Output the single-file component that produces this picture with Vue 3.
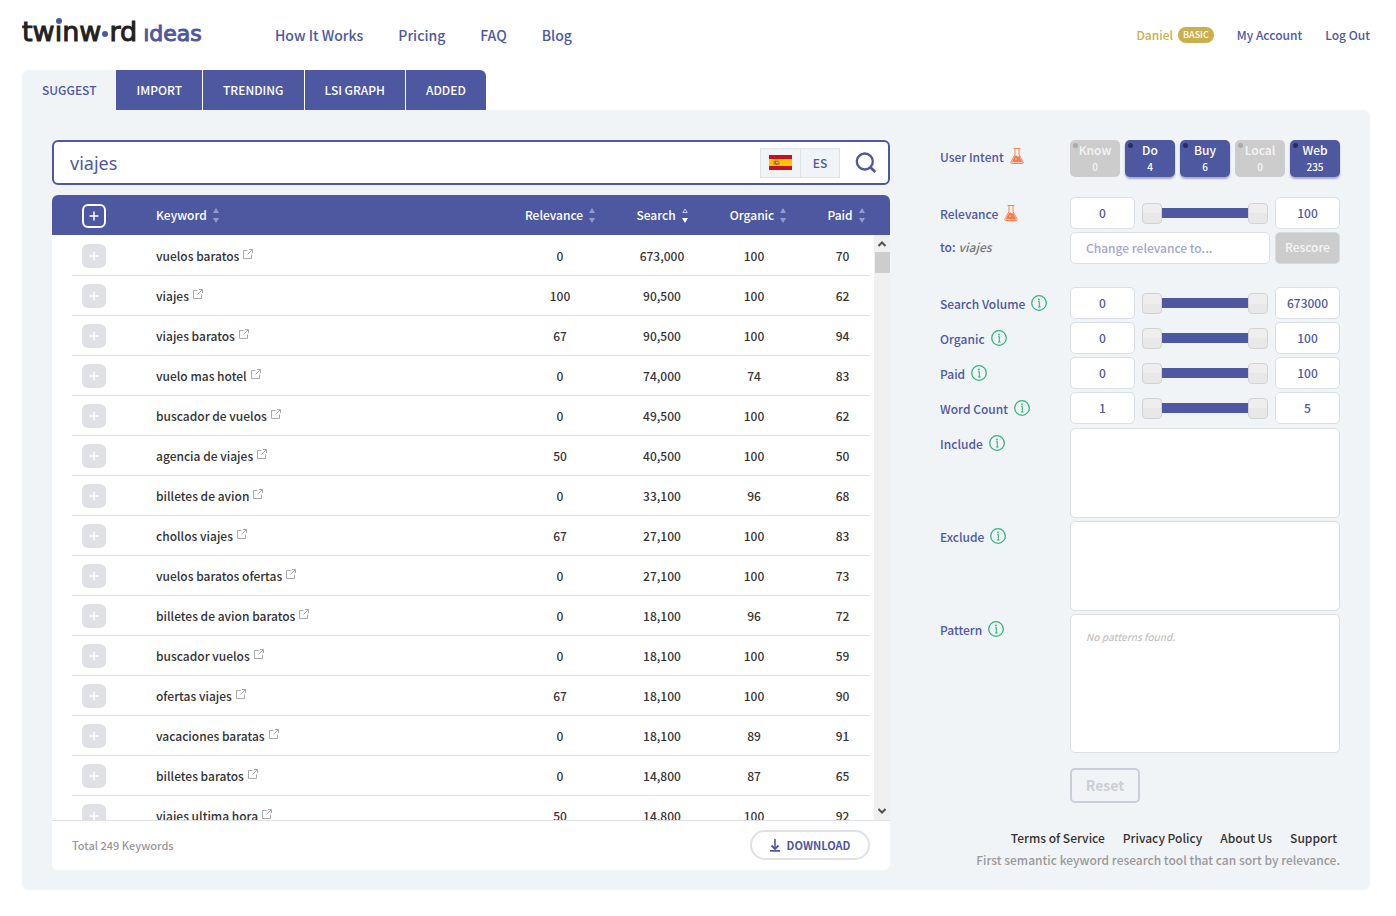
<script setup>
import { ref, reactive } from 'vue'

const nav = ['How It Works', 'Pricing', 'FAQ', 'Blog']
const tabs = ['SUGGEST', 'IMPORT', 'TRENDING', 'LSI GRAPH', 'ADDED']
const activeTab = ref('SUGGEST')
const query = ref('viajes')

const columns = [
  { label: 'Keyword', key: 'keyword' },
  { label: 'Relevance', key: 'relevance' },
  { label: 'Search', key: 'volume', sorted: true },
  { label: 'Organic', key: 'organic' },
  { label: 'Paid', key: 'paid' },
]

const rows = [
  ['vuelos baratos', 0, '673,000', 100, 70],
  ['viajes', 100, '90,500', 100, 62],
  ['viajes baratos', 67, '90,500', 100, 94],
  ['vuelo mas hotel', 0, '74,000', 74, 83],
  ['buscador de vuelos', 0, '49,500', 100, 62],
  ['agencia de viajes', 50, '40,500', 100, 50],
  ['billetes de avion', 0, '33,100', 96, 68],
  ['chollos viajes', 67, '27,100', 100, 83],
  ['vuelos baratos ofertas', 0, '27,100', 100, 73],
  ['billetes de avion baratos', 0, '18,100', 96, 72],
  ['buscador vuelos', 0, '18,100', 100, 59],
  ['ofertas viajes', 67, '18,100', 100, 90],
  ['vacaciones baratas', 0, '18,100', 89, 91],
  ['billetes baratos', 0, '14,800', 87, 65],
  ['viajes ultima hora', 50, '14,800', 100, 92],
]

const intents = reactive([
  { name: 'Know', count: 0, on: false },
  { name: 'Do', count: 4, on: true },
  { name: 'Buy', count: 6, on: true },
  { name: 'Local', count: 0, on: false },
  { name: 'Web', count: 235, on: true },
])

const relevance = reactive({ id: 'relevance', label: 'Relevance', min: 0, max: 100, low: 0, high: 100, flask: true })
const volume = reactive([
  { id: 'volume', label: 'Search Volume', min: 0, max: 673000, low: 0, high: 673000 },
  { id: 'organic', label: 'Organic', min: 0, max: 100, low: 0, high: 100 },
  { id: 'paid', label: 'Paid', min: 0, max: 100, low: 0, high: 100 },
  { id: 'words', label: 'Word Count', min: 1, max: 5, low: 1, high: 5 },
])
const groups = [[relevance], volume]
const footerLinks = ['Terms of Service', 'Privacy Policy', 'About Us', 'Support']
</script>

<template>
  <div class="page">
    <svg class="sprite" aria-hidden="true">
      <symbol id="flask" viewBox="0 0 14 16">
        <path d="M3.5.5h7M5 .5v6L.8 14.2q-.4 1.2.8 1.3h10.8q1.2-.1.8-1.3L9 6.500v-6" fill="none" stroke="#f98355" />
        <path d="M5 7.500 1.800 14.200h10.400L9 7.500l-.8 1.200-1.200-1z" fill="#fb7a48" />
        <circle cx="6" cy="11" r=".7" fill="#fff" />
      </symbol>
      <symbol id="info" viewBox="0 0 16 16">
        <circle cx="8" cy="8" r="7.300" fill="none" stroke="#35b57a" stroke-width="1.300" />
        <path d="M7 6.700h1.300V12M7 12h2.600" fill="none" stroke="#35b57a" stroke-width="1.100" />
        <circle cx="8" cy="4.500" r=".9" fill="#35b57a" />
      </symbol>
      <symbol id="plus" viewBox="0 0 10 10">
        <path d="M5 .5v9M.5 5h9" fill="none" stroke="#fff" stroke-width="1.500" />
      </symbol>
      <symbol id="external" viewBox="0 0 10 10">
        <path d="M4.500 1.500h-4v8h8v-4M6 .5h3.500V4M9.300.7 4.500 5.500" fill="none" stroke="#aaa" />
      </symbol>
    </svg>

    <header class="top">
      <a href="#" class="logo" aria-label="twinword ideas">
        <span class="brand">tw<span class="dotted">ı</span>nw<span class="mid"></span>rd</span>
        <span class="product">ıdeas</span>
      </a>
      <nav class="nav">
        <a v-for="n in nav" :key="n" href="#">{{ n }}</a>
      </nav>
      <div class="account">
        <a href="#" class="user">Daniel <span class="badge">BASIC</span></a>
        <a href="#">My Account</a>
        <a href="#">Log Out</a>
      </div>
    </header>

    <div class="tabs" role="tablist">
      <button v-for="t in tabs" :key="t" role="tab" :aria-selected="t === activeTab" :class="{ active: t === activeTab }" @click="activeTab = t">{{ t }}</button>
    </div>

    <main class="panel">
      <section class="results">
        <form class="search" @submit.prevent>
          <input v-model="query" type="text" aria-label="Keyword search" />
          <button type="button" class="lang" aria-label="Language: ES">
            <span class="cell">
              <svg class="flag" viewBox="0 0 23 15">
                <path d="M0 0h23v15H0z" fill="#c4111f" />
                <path d="M0 4h23v7H0z" fill="#fec400" />
                <path d="M5.500 6h4v3q-2 2-4 0z" fill="#b5562a" />
                <path d="M5.500 5h4M5 6v4M10 7v3" stroke="#a6762c" fill="none" />
                <circle cx="8" cy="7.500" r="1" fill="#d9bfa0" />
              </svg>
            </span>
            <span class="cell">ES</span>
          </button>
          <button type="submit" class="go" aria-label="Search">
            <svg viewBox="0 0 22 22" fill="none" stroke="#4e58a1" stroke-width="2.300">
              <circle cx="9.800" cy="9.500" r="8" />
              <path d="M15.300 15.300 20.300 20" stroke-width="2.800" />
            </svg>
          </button>
        </form>

        <div class="card">
          <div class="list">
            <table>
              <colgroup>
                <col class="c-add" /><col /><col class="c-num" /><col class="c-num" /><col class="c-organic" /><col class="c-paid" />
              </colgroup>
              <thead>
                <tr>
                  <th class="add"><button class="plus all" aria-label="Add all"><svg><use href="#plus" /></svg></button></th>
                  <th v-for="c in columns" :key="c.key" :class="c.key">
                    <span class="head">{{ c.label }}
                      <svg class="sort" viewBox="0 0 6 15">
                        <path v-if="c.sorted" d="M.8 4.500 3 1l2.200 3.500z" fill="none" stroke="#dfe2f2" stroke-width=".8" />
                        <path v-else d="M0 5 3 0l3 5z" fill="#949bcb" />
                        <path d="M0 10h6l-3 5z" :fill="c.sorted ? '#fff' : '#949bcb'" />
                      </svg>
                    </span>
                  </th>
                </tr>
              </thead>
              <tbody>
                <tr v-for="r in rows" :key="r[0]">
                  <td class="add"><button class="plus" :aria-label="'Add ' + r[0]"><svg><use href="#plus" /></svg></button></td>
                  <td class="keyword">{{ r[0] }}<a href="#" class="ext" :aria-label="'Open ' + r[0]"><svg><use href="#external" /></svg></a></td>
                  <td>{{ r[1] }}</td>
                  <td>{{ r[2] }}</td>
                  <td>{{ r[3] }}</td>
                  <td class="paid">{{ r[4] }}</td>
                </tr>
              </tbody>
            </table>
            <div class="scrollbar" aria-hidden="true">
              <svg viewBox="0 0 8 6"><path d="M.5 5 4 1.500 7.500 5" /></svg>
              <span class="thumb"></span>
              <svg viewBox="0 0 8 6"><path d="M.5 1 4 4.500 7.500 1" /></svg>
            </div>
          </div>
          <div class="summary">
            <span>Total 249 Keywords</span>
            <button class="download">
              <svg viewBox="0 0 10 13" fill="none" stroke="#4e58a1">
                <path d="M5 0v9" stroke-width="1.600" />
                <path d="M1.500 6.500 5 10l3.500-3.500" stroke-width="1.800" />
                <path d="M0 11.800h10" stroke-width="1.800" />
              </svg>
              DOWNLOAD
            </button>
          </div>
        </div>
      </section>

      <aside class="filters">
        <div class="row">
          <span class="label">User Intent <svg class="flask"><use href="#flask" /></svg></span>
          <div class="intents">
            <button v-for="i in intents" :key="i.name" class="intent" :class="{ on: i.on }" :aria-pressed="i.on" @click="i.on = !i.on">
              <span>{{ i.name }}</span><small>{{ i.count }}</small>
            </button>
          </div>
        </div>

        <div v-for="(group, g) in groups" :key="g" class="group">
          <div v-for="f in group" :key="f.id" class="row">
            <label class="label" :for="f.id + '-low'">{{ f.label }}
              <svg v-if="f.flask" class="flask"><use href="#flask" /></svg>
              <svg v-else class="info"><use href="#info" /></svg>
            </label>
            <div class="range">
              <input :id="f.id + '-low'" v-model.number="f.low" class="box" type="text" />
              <div class="slider">
                <input v-model.number="f.low" type="range" :min="f.min" :max="f.max" :aria-label="f.label + ' minimum'" />
                <input v-model.number="f.high" type="range" :min="f.min" :max="f.max" :aria-label="f.label + ' maximum'" />
              </div>
              <input v-model.number="f.high" class="box" type="text" :aria-label="f.label + ' upper limit'" />
            </div>
          </div>
          <div v-if="g === 0" class="row">
            <label class="label target" for="relative">to: <em>viajes</em></label>
            <div class="rescore">
              <input id="relative" class="box" type="text" placeholder="Change relevance to..." />
              <button>Rescore</button>
            </div>
          </div>
        </div>

        <div class="areas">
          <div class="row">
            <label class="label" for="include">Include <svg class="info"><use href="#info" /></svg></label>
            <textarea id="include" class="box"></textarea>
          </div>
          <div class="row">
            <label class="label" for="exclude">Exclude <svg class="info"><use href="#info" /></svg></label>
            <textarea id="exclude" class="box"></textarea>
          </div>
          <div class="row">
            <span class="label">Pattern <svg class="info"><use href="#info" /></svg></span>
            <div class="box patterns">No patterns found.</div>
          </div>
        </div>
        <button class="reset">Reset</button>

        <footer class="foot">
          <nav><a v-for="l in footerLinks" :key="l" href="#">{{ l }}</a></nav>
          <p>First semantic keyword research tool that can sort by relevance.</p>
        </footer>
      </aside>
    </main>
  </div>
</template>

<style>
body {
  margin: 0;
  background: #fff;
}
</style>

<style scoped>
.page {
  padding: 0 26px 26px 22px;
  font: 500 12px/20px "Noto Sans CJK KR", "Noto Sans CJK JP", "Noto Sans", sans-serif;
  color: #333;
}
.page *, .page *::before {
  box-sizing: border-box;
}
.sprite {
  position: absolute;
  width: 0;
  height: 0;
}
a {
  color: #4e58a1;
  text-decoration: none;
}
button, input, textarea {
  margin: 0;
  font: inherit;
  color: inherit;
}
button {
  padding: 0;
  border: 0;
  background: none;
  cursor: pointer;
}
.top {
  display: flex;
  align-items: center;
  height: 70px;
}
.logo {
  display: flex;
  align-items: baseline;
  gap: 6px;
  width: 253px;
  height: 42px;
  margin-bottom: 6px;
  font-family: "DejaVu Sans", sans-serif;
  font-weight: 400;
  white-space: nowrap;
}
.brand {
  font-size: 27px;
  line-height: 42px;
  color: #231f20;
  -webkit-text-stroke: 1px #231f20;
}
.dotted {
  position: relative;
}
.dotted::before {
  content: "";
  position: absolute;
  top: 2px;
  left: 1px;
  width: 6px;
  height: 6px;
  border-radius: 50%;
  background: #4e58a1;
}
.mid {
  display: inline-block;
  width: 6px;
  height: 6px;
  margin: 0 1px 4px;
  border-radius: 50%;
  background: #4e58a1;
}
.product {
  font-size: 22px;
  line-height: 42px;
  -webkit-text-stroke: 1px #4e58a1;
}
.nav {
  display: flex;
  gap: 35px;
  font-size: 14px;
}
.account {
  display: flex;
  gap: 23px;
  margin-left: auto;
}
.user {
  display: flex;
  align-items: center;
  gap: 5px;
  color: #c9b04b;
}
.badge {
  padding: 0 5px;
  border-radius: 8px;
  background: #c9b04b;
  color: #fff;
  font-size: 9px;
  line-height: 16px;
}
.tabs {
  display: flex;
  gap: 1px;
  height: 40px;
}
.tabs button {
  padding: 0 20px;
  background: #4e58a1;
  color: #fff;
}
.tabs button.active {
  margin-right: -1px;
  border-radius: 6px 0 0 0;
  background: #f1f4f7;
  color: #4e58a1;
}
.tabs button:last-child {
  border-radius: 0 6px 0 0;
}
.panel {
  display: flex;
  gap: 50px;
  padding: 30px 30px 20px;
  border-radius: 0 6px 6px 6px;
  background: #f1f4f7;
}
.results {
  flex: 1;
  min-width: 0;
}
.search {
  display: flex;
  align-items: center;
  height: 45px;
  margin-bottom: 10px;
  border: 2px solid #4e58a1;
  border-radius: 6px;
  background: #fff;
  color: #4e58a1;
}
.search input {
  flex: 1;
  min-width: 0;
  padding: 0 16px;
  border: 0;
  outline: 0;
  background: none;
  font: 400 18px/24px "Noto Sans", sans-serif;
}
.lang {
  display: flex;
  border: 1px solid #dfe3e9;
  background: #f1f4f7;
}
.cell {
  display: flex;
  align-items: center;
  justify-content: center;
  width: 38px;
  height: 28px;
}
.cell:first-child {
  width: 40px;
  border-right: 1px solid #dfe3e9;
}
.flag {
  width: 23px;
  height: 15px;
}
.go {
  display: flex;
  margin: 0 11px 0 15px;
}
.go svg {
  width: 22px;
  height: 22px;
}
.card {
  overflow: hidden;
  border-radius: 6px;
  background: #fff;
}
.list {
  position: relative;
  height: 625px;
  padding: 0 20px;
  overflow: hidden;
  background: linear-gradient(#4e58a1 40px, #fff 40px);
}
table {
  width: 100%;
  table-layout: fixed;
  border-collapse: separate;
  border-spacing: 0;
}
.c-add {
  width: 84px;
}
.c-num {
  width: 102px;
}
.c-organic {
  width: 82px;
}
.c-paid {
  width: 75px;
}
th {
  height: 41px;
  padding: 0 0 2px;
  font-weight: 500;
  color: #fff;
}
th.keyword, td.keyword {
  text-align: left;
}
td {
  height: 40px;
  padding: 1px 0 0;
  border-bottom: 1px solid #dfe1e6;
  text-align: center;
}
td.add, th.add {
  padding: 1px 0 0 10px;
  text-align: left;
}
th.organic {
  padding-left: 8px;
}
td.paid {
  padding-left: 20px;
}
th.paid {
  padding-left: 27px;
}
.head {
  display: inline-flex;
  align-items: center;
  gap: 6px;
  vertical-align: middle;
}
.sort {
  width: 6px;
  height: 15px;
}
.plus {
  display: flex;
  align-items: center;
  justify-content: center;
  width: 24px;
  height: 24px;
  border-radius: 6px;
  background: #dfe1e6;
}
.plus.all {
  border: 2px solid #fff;
  background: none;
}
.plus svg {
  width: 10px;
  height: 10px;
}
.ext {
  margin-left: 4px;
}
.ext svg {
  width: 10px;
  height: 10px;
  vertical-align: 2px;
}
.scrollbar {
  position: absolute;
  top: 40px;
  right: 0;
  bottom: 0;
  display: flex;
  flex-direction: column;
  align-items: center;
  width: 16px;
  padding: 6px 0;
  background: #f0f0f0;
}
.scrollbar svg {
  width: 8px;
  height: 6px;
  fill: none;
  stroke: #505050;
  stroke-width: 2;
}
.thumb {
  width: 15px;
  height: 21px;
  margin: 5px 0 auto;
  background: #cdcdcd;
}
.summary {
  display: flex;
  align-items: center;
  justify-content: space-between;
  height: 50px;
  padding: 0 20px 1px;
  border-top: 1px solid #dfe1e6;
  font-size: 11px;
  color: #999;
}
.download {
  display: flex;
  align-items: center;
  justify-content: center;
  gap: 7px;
  width: 120px;
  height: 30px;
  border: 2px solid #dfe1e6;
  border-radius: 15px;
  font-weight: 700;
  color: #4e58a1;
}
.download svg {
  width: 10px;
  height: 13px;
}
.filters {
  width: 400px;
  color: #4e58a1;
}
.row {
  display: grid;
  grid-template-columns: 130px 1fr;
}
.label {
  display: flex;
  gap: 6px;
  height: 32px;
  line-height: 34px;
}
.target {
  gap: 3px;
  line-height: 30px;
}
.flask {
  width: 14px;
  height: 16px;
  margin-top: 8px;
}
.info {
  width: 16px;
  height: 16px;
  margin-top: 8px;
}
em {
  color: #777;
}
.intents {
  display: flex;
  gap: 5px;
}
.intent {
  position: relative;
  display: flex;
  flex: 1;
  flex-direction: column;
  align-items: center;
  height: 37px;
  padding-top: 1px;
  border-radius: 5px;
  background: #ccc;
  color: #f5f5f5;
  line-height: 18px;
}
.intent small {
  font-size: 10px;
  line-height: 15px;
}
.intent::before {
  content: "";
  position: absolute;
  top: 3px;
  left: 3px;
  width: 5px;
  height: 5px;
  border-radius: 50%;
  background: #aaa;
}
.intent.on {
  background: #4e58a1;
  color: #fff;
  box-shadow: 0 2px 2px #a5a9c4;
}
.intent.on::before {
  background: #272e63;
}
.group {
  display: grid;
  gap: 3px;
  margin-top: 20px;
}
.group + .group {
  margin-top: 23px;
}
.range {
  display: grid;
  grid-template-columns: 65px 1fr 65px;
  align-items: center;
  gap: 7px;
}
.box {
  width: 100%;
  height: 32px;
  border: 1px solid #dadfe6;
  border-radius: 5px;
  outline: 0;
  background: #fff;
}
.range .box {
  padding: 0 0 2px;
  text-align: center;
}
.slider {
  display: grid;
  background: linear-gradient(#4e58a1, #4e58a1) center / 88px 10px no-repeat;
}
.slider input {
  grid-area: 1 / 1;
  width: 100%;
  height: 21px;
  appearance: none;
  background: none;
  pointer-events: none;
}
.slider input::-webkit-slider-thumb {
  appearance: none;
  box-sizing: border-box;
  width: 20px;
  height: 21px;
  border: 1px solid #d2d2d2;
  border-radius: 4px;
  background: linear-gradient(#eee 50%, #e8e8e8 50%);
  pointer-events: auto;
}
.rescore {
  display: grid;
  grid-template-columns: 1fr 65px;
  gap: 5px;
}
.rescore .box {
  min-width: 0;
  padding: 0 15px 2px;
}
.rescore .box::placeholder {
  color: #a3a8cc;
  opacity: 1;
}
.rescore button {
  padding-bottom: 2px;
  border: 1px solid #d7dade;
  border-radius: 5px;
  background: #ccc;
  color: #f5f5f5;
}
.areas {
  display: grid;
  gap: 3px;
  margin-top: 4px;
}
.areas .label {
  line-height: 32px;
}
.areas .info {
  margin-top: 7px;
}
textarea.box {
  display: block;
  height: 90px;
  resize: none;
}
.patterns {
  height: 139px;
  padding: 12px 15px;
  color: #c4c4c4;
  font-size: 10px;
  font-style: italic;
}
.reset {
  width: 70px;
  height: 35px;
  margin: 15px 0 0 130px;
  padding-bottom: 2px;
  border: 2px solid #cbced6;
  border-radius: 5px;
  color: #cbced6;
  font-size: 14px;
  font-weight: 700;
}
.foot {
  margin-top: 25px;
  text-align: right;
}
.foot nav {
  display: flex;
  justify-content: flex-end;
  gap: 18px;
  padding-right: 3px;
}
.foot nav a {
  color: #333;
}
.foot p {
  margin: 2px 0 0;
  color: #999;
}
</style>
